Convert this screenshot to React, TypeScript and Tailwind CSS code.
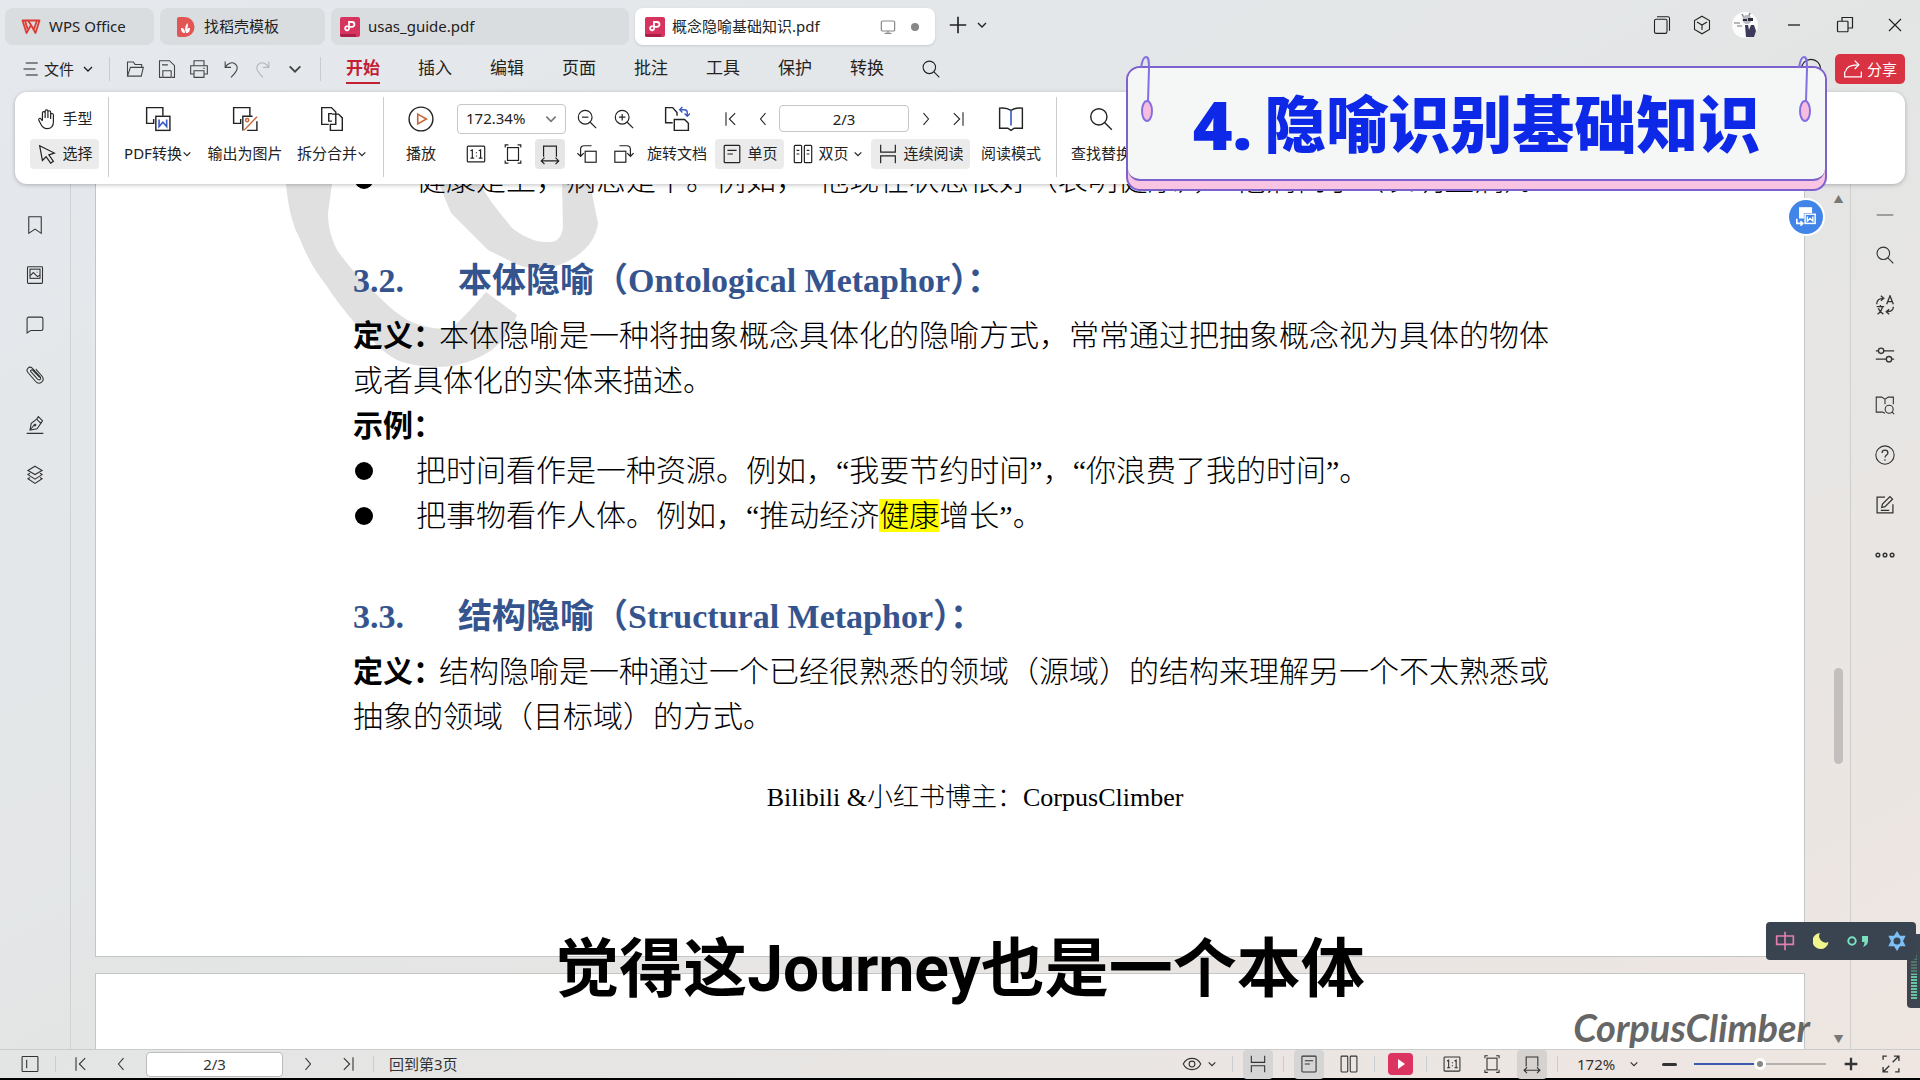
/**
 * App.tsx
 *
 * PDF reader window: tab strip, menu, ribbon, document view with side rails,
 * status bar, and the caption overlays shown on top of it.
 */

import { FC, ReactNode } from "react";
import { clsx } from "clsx";

interface IconProps {
  children: ReactNode;
  className?: string;
}

const Icon: FC<IconProps> = ({ children, className = "size-6" }) => (
  <svg
    viewBox="0 0 24 24"
    fill="none"
    stroke="currentColor"
    strokeWidth="1.3"
    className={clsx("shrink-0", className)}
    aria-hidden="true"
  >
    {children}
  </svg>
);

const ChevronDown: FC<{ className?: string }> = ({ className = "size-3" }) => (
  <svg
    viewBox="0 0 12 12"
    fill="none"
    stroke="currentColor"
    strokeWidth="1.4"
    className={clsx("shrink-0", className)}
    aria-hidden="true"
  >
    <path d="M2 4l4 4 4-4" />
  </svg>
);

const icons = {
  search: (
    <>
      <circle cx="10" cy="10" r="7.5" />
      <path d="M15.5 15.5L22 22" />
    </>
  ),
  first: <path d="M6 4v16M17 5l-7 7 7 7" />,
  prev: <path d="M15 5l-6 7 6 7" />,
  next: <path d="M9 5l6 7-6 7" />,
  last: <path d="M18 4v16M7 5l7 7-7 7" />,
  actualSize: (
    <>
      <rect x="2.5" y="3.5" width="19" height="17" rx="1" />
      <path d="M6 8.5l2-1v9M6 16.500h4M15 8.500l2-1v9M15 16.500h4M12.500 10v1.200M12.500 13.500v1.200" />
    </>
  ),
  fitPage: (
    <>
      <rect x="6" y="5" width="12" height="14" />
      <path d="M7 2H3.500v3M17 2h3.500v3M7 22H3.500v-3M17 22h3.500v-3" />
    </>
  ),
  fitWidth: (
    <path d="M5 15V3.500h14V15M2.500 19.500h19M6 16l-3.500 3.500L6 23M18 16l3.500 3.500L18 23" />
  ),
  continuous: <path d="M4 2v8h16V2M4 22v-8h16v8" />,
  singlePage: (
    <>
      <rect x="3.500" y="2.500" width="17" height="19" rx="1" />
      <path d="M7 8h10M7 12h6" />
    </>
  ),
  twoPages: (
    <>
      <rect x="2.500" y="2.500" width="8" height="19" rx="1" />
      <rect x="13.500" y="2.500" width="8" height="19" rx="1" />
    </>
  ),
};

const PdfBadge: FC = () => (
  <svg viewBox="0 0 20 20" className="size-5 shrink-0" aria-hidden="true">
    <rect width="20" height="20" rx="2" fill="#d6335f" />
    <path d="M0 17h16v3H2a2 2 0 0 1-2-2z" fill="#a91f47" />
    <path
      d="M8 9.500a2 2 0 1 0 1 2.500V5h3a2.400 2.400 0 0 1 0 4.900H9"
      fill="none"
      stroke="#fff"
      strokeWidth="1.800"
    />
  </svg>
);

const Divider: FC<{ className?: string }> = ({ className = "" }) => (
  <div className={clsx("w-px shrink-0 bg-[#c9cdd0]", className)} />
);

interface IconButtonProps {
  label: string;
  children: ReactNode;
  className?: string;
}

const IconButton: FC<IconButtonProps> = ({ label, children, className = "" }) => (
  <button
    type="button"
    aria-label={label}
    className={clsx("flex shrink-0 items-center justify-center", className)}
  >
    {children}
  </button>
);

/* ---------- Tab strip ---------- */

const TabStrip: FC = () => (
  <header className="flex h-[50px] shrink-0 items-center pl-[5px]">
    <nav className="flex gap-[6px] pt-[3px] text-[15px]">
      <button className="flex h-[37px] w-[149px] items-center gap-2 rounded-lg bg-[#dadde0] px-4">
        <svg viewBox="0 0 20 16" className="h-4 w-5" aria-hidden="true">
          <path
            d="M1.500 1.500h17L14.500 14 10 6 5.500 14zM4 1.500L6.500 10M16 1.500L13 10M7 1.500L10 6"
            fill="none"
            stroke="#dc3c34"
            strokeWidth="1.800"
            strokeLinejoin="round"
          />
        </svg>
        WPS Office
      </button>
      <button className="flex h-[37px] w-[165px] items-center gap-2 rounded-lg bg-[#dadde0] px-4">
        <svg viewBox="0 0 20 20" className="size-5" aria-hidden="true">
          <path d="M1 2a2 2 0 0 1 2-2h6a9.500 10 0 0 1 0 20H3a2 2 0 0 1-2-2z" fill="#e25555" />
          <path
            d="M9 16c-3 0-4-2-4-5 3 0 4 2 4 5zM9.500 15c-1-4 0-7 2-9 1 3 0 6-2 9zM10 16c0-3 1-5 4-5 0 3-1 5-4 5z"
            fill="#fff"
          />
        </svg>
        找稻壳模板
      </button>
      <button className="flex h-[37px] w-[298px] items-center gap-2 rounded-lg bg-[#dadde0] px-[9px]">
        <PdfBadge />
        usas_guide.pdf
      </button>
      <button className="flex h-[37px] w-[300px] items-center rounded-lg bg-white px-[10px] shadow-sm">
        <PdfBadge />
        <span className="ml-[7px] flex-1 text-left">概念隐喻基础知识.pdf</span>
        <Icon className="mr-[15px] size-4 text-[#888]">
          <rect x="2" y="3" width="20" height="15" rx="2" strokeWidth="1.800" />
          <path d="M7 21.500h10M12 18v3" strokeWidth="1.800" />
        </Icon>
        <span className="mr-[6px] size-2 rounded-full bg-[#888]" />
      </button>
    </nav>
    <IconButton label="新建标签" className="ml-2 w-[30px]">
      <Icon className="size-[22px]">
        <path d="M12 3v18M3 12h18" strokeWidth="1.800" />
      </Icon>
    </IconButton>
    <IconButton label="标签列表" className="w-[18px]">
      <ChevronDown />
    </IconButton>
    <div className="ml-auto flex items-center">
      <IconButton label="侧边栏" className="w-10">
        <Icon className="size-5">
          <rect x="3" y="5" width="15" height="17" rx="2" />
          <path d="M6 2h13a2 2 0 0 1 2 2v15" />
        </Icon>
      </IconButton>
      <IconButton label="应用" className="w-10">
        <Icon className="size-5">
          <path d="M12 1.500l9 5.200v10.600l-9 5.200-9-5.200V6.700zM6 8.500l6 3.500 6-3.500M12 12v6" />
        </Icon>
      </IconButton>
      <IconButton label="账户" className="w-[46px]">
        <svg viewBox="0 0 26 26" className="size-[26px]" aria-hidden="true">
          <circle cx="13" cy="13" r="13" fill="#fbfbfc" />
          <path d="M10 2l2 4M18 1l-2 5" stroke="#85858f" strokeWidth="1.500" />
          <circle cx="15" cy="7.500" r="4.500" fill="#b9b9c2" />
          <path d="M11 7h4v2h-4zM16 6h5v3h-5z" fill="#2a2a3a" />
          <path d="M13 13h9l2 6-2 6h-8z" fill="#3b3a5a" />
          <path d="M16 13l1 5 2-5z" fill="#eee" />
          <path d="M2 11h6M5 14h5" stroke="#777" strokeWidth="1.200" />
        </svg>
      </IconButton>
      <IconButton label="最小化" className="w-[52px]">
        <Icon className="size-4">
          <path d="M3 12h18" strokeWidth="2" />
        </Icon>
      </IconButton>
      <IconButton label="还原" className="w-[50px]">
        <Icon className="size-[18px]">
          <rect x="2" y="7" width="14" height="14" rx="1" strokeWidth="1.600" />
          <path d="M8 7V2h14v14h-6" strokeWidth="1.600" />
        </Icon>
      </IconButton>
      <IconButton label="关闭" className="w-[50px]">
        <Icon className="size-[18px]">
          <path d="M4 4l16 16M20 4L4 20" strokeWidth="1.600" />
        </Icon>
      </IconButton>
    </div>
  </header>
);

/* ---------- Menu row ---------- */

const menuItems = ["开始", "插入", "编辑", "页面", "批注", "工具", "保护", "转换"];

const MenuRow: FC = () => (
  <div className="flex h-[38px] shrink-0 items-center pr-[15px] pl-[22px]">
    <button className="flex w-[87px] items-center text-[15px]">
      <Icon className="mr-1 size-[18px]">
        <path d="M5 4h16M2 12h16M5 20h16" strokeWidth="1.600" />
      </Icon>
      文件
      <ChevronDown className="ml-2 size-3" />
    </button>
    <Divider className="mr-[9px] h-6" />
    <div className="flex text-[#444]">
      <IconButton label="打开" className="w-8">
        <Icon className="size-5">
          <path d="M3 20.500V3.500h7l2 3h8V10M3 20.500L6.500 10H22l-2.500 10.500z" />
        </Icon>
      </IconButton>
      <IconButton label="保存" className="w-8">
        <Icon className="size-5">
          <path d="M6 22H3V2h12l6 6v14h-3M7 22v-8h10v8zM6 7h7" />
        </Icon>
      </IconButton>
      <IconButton label="打印" className="w-8">
        <Icon className="size-5">
          <path d="M6 8V2h12v6M6 18H2V8h20v10h-4M6 14h12v8H6zM17 11h2" />
        </Icon>
      </IconButton>
      <IconButton label="撤销" className="w-8">
        <Icon className="size-5">
          <path d="M5 3v7h7M5 10c3-5 8-7 12-4 5 4 2 9-5 16" />
        </Icon>
      </IconButton>
      <IconButton label="恢复" className="w-8 text-[#b4b7ba]">
        <Icon className="size-5">
          <path d="M19 3v7h-7M19 10c-3-5-8-7-12-4-5 4-2 9 5 16" />
        </Icon>
      </IconButton>
      <IconButton label="更多" className="w-8">
        <ChevronDown className="size-4" />
      </IconButton>
    </div>
    <Divider className="mr-[6px] ml-[9px] h-6" />
    {menuItems.map((item, i) => (
      <button
        key={item}
        className={clsx(
          "flex w-[72px] justify-center text-[17px] leading-7",
          i === 0 && "font-bold text-[#c32034]"
        )}
      >
        <span className={clsx("border-b-2", i === 0 ? "border-[#c32034]" : "border-transparent")}>
          {item}
        </span>
      </button>
    ))}
    <IconButton label="搜索" className="ml-4 w-[24px]">
      <Icon className="size-5">{icons.search}</Icon>
    </IconButton>
    <IconButton label="云同步" className="mr-[13px] ml-auto w-[22px]">
      <Icon className="size-[22px]">
        <circle cx="12" cy="12" r="10.500" />
      </Icon>
    </IconButton>
    <button className="flex h-[30px] w-[70px] items-center justify-center gap-1 rounded-[5px] bg-[#d93343] text-[15px] text-white">
      <Icon className="size-5">
        <path d="M2 15v6.500h20V15M3 15c1-6 6-8 15-8M14 2l5 5-5 5" strokeWidth="1.500" />
      </Icon>
      分享
    </button>
  </div>
);

/* ---------- Ribbon ---------- */

interface BigButtonProps {
  label: string;
  children: ReactNode;
  className?: string;
  menu?: boolean;
}

const BigButton: FC<BigButtonProps> = ({ label, children, className = "", menu }) => (
  <button className={clsx("grid shrink-0 grid-rows-[35px_35px] place-items-center", className)}>
    <Icon className="size-[26px]">{children}</Icon>
    <span className="flex items-center whitespace-nowrap">
      {label}
      {menu && <ChevronDown className="size-[10px]" />}
    </span>
  </button>
);

const Ribbon: FC = () => (
  <section className="relative z-10 mx-[15px] mt-1 flex h-[92px] shrink-0 rounded-xl bg-white pt-[9px] pb-[11px] text-[15px] shadow-[0_1px_4px_rgba(0,0,0,0.25)]">
    <div className="grid w-[93px] grid-rows-[35px_35px] items-center pl-[15px]">
      <button className="flex h-[30px] w-[69px] items-center justify-center gap-1">
        <Icon className="size-[22px]">
          <path d="M7 14V5.500a1.500 1.500 0 0 1 3 0V11M10 11V3.500a1.500 1.500 0 0 1 3 0V11M13 11V4.500a1.500 1.500 0 0 1 3 0V12M16 12V7.500a1.500 1.500 0 0 1 3 0V15c0 5-3 7.500-7 7.500-3.500 0-5-1.500-6.500-4.500L3 13c-.5-1.500 1.500-2.500 2.500-1L7 14" />
        </Icon>
        手型
      </button>
      <button className="flex h-[30px] w-[69px] items-center justify-center gap-1 rounded bg-[#ebebeb]">
        <Icon className="size-[22px]">
          <path d="M4 3l16 8-6 2 5 7-3 2-5-7-4 4z" />
        </Icon>
        选择
      </button>
    </div>
    <Divider className="-my-[4px]" />
    <div className="flex w-[274px] justify-center pr-[2px]">
      <BigButton label="PDF转换" menu className="w-[87px]">
        <path d="M8 16H1.500V1.500h15V9M4 16h4v-4" />
        <rect x="10" y="9.500" width="13" height="13" />
        <path d="M13 12.500v6.500l3.500-4 3.500 4v-6.500" stroke="#3a5bc7" strokeWidth="1.500" />
      </BigButton>
      <BigButton label="输出为图片" className="w-[87px]">
        <path d="M8 16H1.500V1.500h15V9M4 16h4v-4M19 9.500h-9v13M23 14v8.500h-9" />
        <path d="M11 22.500L23 10" stroke="#c8673a" />
        <circle cx="14" cy="13" r="1.500" stroke="#c8673a" />
      </BigButton>
      <BigButton label="拆分合并" menu className="w-[87px]">
        <path d="M9 17H2.500V1.500h9l4 4V7M12 7.500h6l3.500 3.500v11.500H10.500v-5.500h5V7.500M12 7H9v7h3" />
      </BigButton>
    </div>
    <Divider className="-my-[4px]" />
    <div className="flex w-[672px] pl-[7px]">
      <BigButton label="播放" className="mr-[6px] w-[60px]">
        <circle cx="12" cy="12" r="11" />
        <path d="M9 7.500l8 4.500-8 4.500z" stroke="#c8673a" strokeWidth="1.500" />
      </BigButton>
      <div className="grid w-[185px] shrink-0 grid-rows-[35px_35px] items-center">
        <div className="flex items-center">
          <div className="relative mr-[2px] w-[109px]">
            <select
              aria-label="缩放比例"
              className="h-[30px] w-full appearance-none rounded border border-[#c6c6c6] bg-white pl-2"
            >
              <option>172.34%</option>
            </select>
            <ChevronDown className="pointer-events-none absolute top-2 right-2 size-[14px] text-[#777]" />
          </div>
          <IconButton label="缩小" className="w-[37px]">
            <Icon className="size-[22px]">
              {icons.search}
              <path d="M6.500 10h7" />
            </Icon>
          </IconButton>
          <IconButton label="放大" className="w-[37px]">
            <Icon className="size-[22px]">
              {icons.search}
              <path d="M6.500 10h7M10 6.500v7" />
            </Icon>
          </IconButton>
        </div>
        <div className="flex">
          <IconButton label="实际大小" className="h-[30px] w-[37px]">
            <Icon className="size-[22px]">{icons.actualSize}</Icon>
          </IconButton>
          <IconButton label="适合页面" className="h-[30px] w-[37px]">
            <Icon className="size-[22px]">{icons.fitPage}</Icon>
          </IconButton>
          <span className="flex w-[37px] justify-center">
            <IconButton label="适合宽度" className="h-[30px] w-[30px] rounded bg-[#e6e6e6]">
              <Icon className="size-[22px]">{icons.fitWidth}</Icon>
            </IconButton>
          </span>
          <IconButton label="向左旋转" className="h-[30px] w-[37px]">
            <Icon className="size-[22px]">
              <rect x="10" y="9" width="12" height="12" />
              <path d="M17 3H9C6 3 5 4.500 5 7v7M1.500 11L5 14.500 8.500 11" />
            </Icon>
          </IconButton>
          <IconButton label="向右旋转" className="h-[30px] w-[37px]">
            <Icon className="size-[22px]">
              <rect x="2" y="9" width="12" height="12" />
              <path d="M7 3h8c3 0 4 1.500 4 4v7M22.500 11L19 14.500 15.500 11" />
            </Icon>
          </IconButton>
        </div>
      </div>
      <BigButton label="旋转文档" className="w-[70px]">
        <path d="M8 15.500H1.500V1.500H8L12 6v3M9.500 12.500h9.500l3.500 3.500v6.500h-13z" />
        <path d="M15 3.500h4c2 0 2.500 1 2.500 3V9M17 1l-2.500 2.500L17 6M19 7l2.500 2.500L24 7" stroke="#3a5bc7" />
      </BigButton>
      <div className="grid w-[260px] shrink-0 grid-rows-[35px_35px] items-center pl-[3px]">
        <div className="flex items-center">
          <IconButton label="第一页" className="w-8">
            <Icon className="size-5">{icons.first}</Icon>
          </IconButton>
          <IconButton label="上一页" className="w-8">
            <Icon className="size-5">{icons.prev}</Icon>
          </IconButton>
          <input
            aria-label="页码"
            defaultValue="2/3"
            className="h-[27px] w-[130px] rounded border border-[#c6c6c6] text-center"
          />
          <IconButton label="下一页" className="w-[34px]">
            <Icon className="size-5">{icons.next}</Icon>
          </IconButton>
          <IconButton label="最后一页" className="w-[29px]">
            <Icon className="size-5">{icons.last}</Icon>
          </IconButton>
        </div>
        <div className="flex items-center gap-[5px]">
          <button className="flex h-[30px] w-[69px] items-center justify-center gap-1 rounded bg-[#ebebeb]">
            <Icon className="size-[22px]">{icons.singlePage}</Icon>
            单页
          </button>
          <button className="flex h-[30px] w-[77px] items-center justify-center gap-1">
            <Icon className="size-[22px]">
              {icons.twoPages}
              <path d="M5 8h3M5 12h3M16 8h3M16 12h3" />
            </Icon>
            双页
            <ChevronDown className="size-[10px]" />
          </button>
          <button className="flex h-[30px] w-[99px] items-center justify-center gap-1 rounded bg-[#ebebeb]">
            <Icon className="size-[22px]">{icons.continuous}</Icon>
            连续阅读
          </button>
        </div>
      </div>
      <BigButton label="阅读模式" className="ml-1 w-[70px]">
        <path d="M12 4C9 2 5 1.500 1.500 2v18.500H9l3 2 3-2h7.500V2C19 1.500 15 2 12 4z" />
        <path d="M12 4v14" stroke="#3a5bc7" strokeWidth="1.500" />
      </BigButton>
    </div>
    <Divider className="-my-[4px]" />
    <BigButton label="查找替换" className="ml-[9px] w-[70px]">
      {icons.search}
    </BigButton>
  </section>
);

/* ---------- Side rails ---------- */

const leftTools: [string, ReactNode][] = [
  ["书签", <path d="M4.500 2h15v20L12 17l-7.500 5z" />],
  [
    "缩略图",
    <>
      <rect x="3" y="2" width="18" height="20" rx="1" />
      <rect x="6" y="5" width="12" height="11" />
      <path d="M6 13l4-4 5 5 3-2M14.500 8v1" />
    </>,
  ],
  ["批注", <path d="M2.500 21.500v-17c0-1 1-2 2-2h15c1 0 2 1 2 2v12c0 1-1 2-2 2H7z" />],
  [
    "附件",
    <path d="M7 8l8 9c2.500 2 5-.5 3-3L9 4C5 .5 .5 5 3.500 9l9 10.500c5 5.500 12-.5 8-6L13 5M7 8c-1-1.500 1-3 2.500-1.500l8 8.500" />,
  ],
  [
    "签名",
    <>
      <path d="M2 22h20M6 18l1.500-8L14 5l5 5-4.500 6.500zM14 5l2-3 5 5-2 3M6 18l5-6" />
      <circle cx="12" cy="12" r="1" />
    </>,
  ],
  [
    "图层",
    <path d="M12 1.500L20.500 6.500 12 11.500 3.500 6.500zM6 10l-2.500 1.500L12 17l8.500-5.500L18 10M6 15l-2.500 1.500L12 22l8.500-5.500L18 15" />,
  ],
];

const rightTools: [string, ReactNode][] = [
  ["折叠", <path d="M1 12h22" stroke="#999" strokeWidth="2.500" />],
  ["查找", icons.search],
  [
    "翻译",
    <path
      d="M2 11c0-5 3-7 8-7M7 1l3.500 3L7 7M14 11l4-10 4 10M15.500 8h5M2 14h9M6.500 12v2M3 23c4-2 5-5 6-9M4 16c1 3 3 5 6 7M22 14c0 4-2 6-8 6M17 17l-3.500 3 3.500 3"
      strokeWidth="1.600"
    />,
  ],
  [
    "设置",
    <>
      <path d="M1 7h3M10.500 7H23M1 17h12.500M20 17h3" strokeWidth="1.600" />
      <circle cx="7.300" cy="7" r="3.200" strokeWidth="1.600" />
      <circle cx="16.800" cy="17" r="3.200" strokeWidth="1.600" />
    </>,
  ],
  [
    "词典",
    <>
      <path d="M12 22l-3-1.500H1.500V2.500l6.500 0 4 2.500 4-2.500h6V11M12 5v6" />
      <circle cx="17" cy="17" r="4.800" />
      <path d="M20.500 20.500L23 23" />
    </>,
  ],
  [
    "帮助",
    <>
      <circle cx="12" cy="12" r="11" />
      <path d="M8.500 9.500c0-4.500 7-4.500 7 0 0 2.500-3.500 2.500-3.500 5.500M12 17v2" strokeWidth="1.500" />
    </>,
  ],
  [
    "反馈",
    <path d="M12 2.500H2.500v19h19V11M8 15l1-4 9-9 3 3-9 9zM7 18.500h10" strokeWidth="1.500" />,
  ],
  [
    "更多",
    <>
      <circle cx="3.500" cy="12" r="2.200" strokeWidth="1.700" />
      <circle cx="12" cy="12" r="2.200" strokeWidth="1.700" />
      <circle cx="20.500" cy="12" r="2.200" strokeWidth="1.700" />
    </>,
  ],
];

/* ---------- Document ---------- */

const Heading: FC<{ number: string; children: ReactNode }> = ({ number, children }) => (
  <h2 className="flex pt-1 text-[34px] leading-[64px] font-bold whitespace-nowrap text-[#35548e]">
    <span className="w-[105px]">{number}</span>
    {children}
  </h2>
);

const Term: FC<{ children: ReactNode }> = ({ children }) => (
  <b className="-mr-1 font-bold">{children}</b>
);

const Bullet: FC<{ children: ReactNode }> = ({ children }) => (
  <li className="flex items-center">
    <span className="mr-[43px] ml-[2px] size-[18px] rounded-full bg-black" />
    <span>{children}</span>
  </li>
);

const Watermark: FC = () => (
  <svg
    viewBox="0 0 520 190"
    className="absolute top-0 left-[186px] h-[190px] w-[520px]"
    fill="#e0e0e0"
    aria-hidden="true"
  >
    <path d="M4 0C6 22 10 40 17 53c8 20 16 34 27 48 10 15 19 27 31 40 14 14 26 28 40 35 18 7 38 8 55 6 16-3 27-8 40-16 12-10 20-20 25-35L204 108c-8 9-16 19-34 36-14 2-28-1-40-6-14-6-28-20-43-35C74 91 62 76 55 66 48 52 46 40 46 29L50 0z" />
    <path d="M157 0l12 29 37 37 26 13c10 5 24 7 38 4 22-5 44-22 46-44L308 0h-28l1 43c-1 10-6 16-15 15-12 1-26-6-36-14L210 19 198 0z" />
  </svg>
);

const DocumentView: FC = () => (
  <div className="flex min-w-0 flex-1 flex-col overflow-hidden pl-6 font-['Liberation_Serif','Noto_Sans_CJK_SC',serif]">
    <article className="relative shrink-0 border border-t-0 border-[#c4c6c6] bg-white pb-[136px] pl-[257px] text-[30px] leading-[45px] font-light text-black">
      <Watermark />
      <div className="relative">
        <div className="mb-[43px] flex h-[18px] items-end overflow-hidden whitespace-nowrap">
          <ul>
            <Bullet>健康是上，病态是下。例如，“他现在状态很好”（表明健康），“他病倒了”（表明生病）。</Bullet>
          </ul>
        </div>
        <Heading number="3.2.">本体隐喻（Ontological Metaphor）：</Heading>
        <p className="whitespace-nowrap">
          <Term>定义：</Term>本体隐喻是一种将抽象概念具体化的隐喻方式，常常通过把抽象概念视为具体的物体
          <br />
          或者具体化的实体来描述。
        </p>
        <p>
          <Term>示例：</Term>
        </p>
        <ul className="whitespace-nowrap">
          <Bullet>把时间看作是一种资源。例如，“我要节约时间”，“你浪费了我的时间”。</Bullet>
          <Bullet>
            把事物看作人体。例如，“推动经济<mark className="bg-[#ffff00]">健康</mark>增长”。
          </Bullet>
        </ul>
        <div className="h-[43px]" />
        <Heading number="3.3.">结构隐喻（Structural Metaphor）：</Heading>
        <p className="whitespace-nowrap">
          <Term>定义：</Term>结构隐喻是一种通过一个已经很熟悉的领域（源域）的结构来理解另一个不太熟悉或
          <br />
          抽象的领域（目标域）的方式。
        </p>
      </div>
      <footer className="mt-9 pr-[207px] text-center text-[26px]">
        Bilibili &amp;小红书博主：CorpusClimber
      </footer>
    </article>
    <article className="mt-4 flex-1 border border-b-0 border-[#c4c6c6] bg-white" />
  </div>
);

/* ---------- Status bar ---------- */

const StatusBar: FC = () => (
  <footer className="flex h-[31px] shrink-0 items-center border-t border-b-2 border-t-[#c9cbcc] border-b-black pr-[19px] text-[15px] text-[#333]">
    <IconButton label="导航窗格" className="w-[60px] pr-px">
      <Icon className="size-5">
        <rect x="2.500" y="3" width="19" height="18" rx="1" />
        <path d="M8 7v10" />
      </Icon>
    </IconButton>
    <Divider className="mr-[5px] -ml-[5px] h-4" />
    <IconButton label="第一页" className="w-10">
      <Icon className="size-5">{icons.first}</Icon>
    </IconButton>
    <IconButton label="上一页" className="w-10">
      <Icon className="size-5">{icons.prev}</Icon>
    </IconButton>
    <input
      aria-label="当前页"
      defaultValue="2/3"
      className="ml-[5px] h-[25px] w-[137px] rounded border border-[#bbb] bg-white text-center"
    />
    <IconButton label="下一页" className="ml-[5px] w-10">
      <Icon className="size-5">{icons.next}</Icon>
    </IconButton>
    <IconButton label="最后一页" className="w-10">
      <Icon className="size-5">{icons.last}</Icon>
    </IconButton>
    <Divider className="mr-[15px] ml-[5px] h-4" />
    <button>回到第3页</button>

    <div className="ml-auto flex items-center">
      <IconButton label="视图" className="w-[46px] gap-[5px]">
        <Icon className="size-5">
          <path d="M1.500 12C6 3 18 3 22.500 12 18 21 6 21 1.500 12z" />
          <circle cx="12" cy="12" r="3.500" />
        </Icon>
        <ChevronDown className="size-[10px]" />
      </IconButton>
      <Divider className="mx-[10px] h-4" />
      <IconButton label="连续" className="h-[29px] w-[30px] rounded bg-[#d5d5d5]">
        <Icon className="size-5">{icons.continuous}</Icon>
      </IconButton>
      <Divider className="mx-[10px] h-4" />
      <IconButton label="单页" className="h-[29px] w-[30px] rounded bg-[#d5d5d5]">
        <Icon className="size-5">{icons.singlePage}</Icon>
      </IconButton>
      <IconButton label="双页" className="ml-[10px] w-[30px]">
        <Icon className="size-5">{icons.twoPages}</Icon>
      </IconButton>
      <Divider className="mr-[13px] ml-[10px] h-4" />
      <IconButton label="播放" className="h-[22px] w-[25px] rounded bg-[#dc3460]">
        <svg viewBox="0 0 10 10" className="size-[10px]" aria-hidden="true">
          <path d="M2 0l7 5-7 5z" fill="#fff" />
        </svg>
      </IconButton>
      <Divider className="mr-[10px] ml-[13px] h-4" />
      <IconButton label="实际大小" className="w-[30px]">
        <Icon className="size-5">{icons.actualSize}</Icon>
      </IconButton>
      <IconButton label="适合页面" className="mx-[10px] w-[30px]">
        <Icon className="size-5">{icons.fitPage}</Icon>
      </IconButton>
      <IconButton label="适合宽度" className="h-[29px] w-[30px] rounded bg-[#d5d2d0]">
        <Icon className="size-5">{icons.fitWidth}</Icon>
      </IconButton>
      <Divider className="mr-[19px] ml-[10px] h-4" />
      <button className="flex w-[62px] items-center justify-between">
        172%
        <ChevronDown className="size-[10px]" />
      </button>
      <IconButton label="缩小" className="ml-[21px] w-[18px]">
        <span className="h-[3px] w-[15px] rounded bg-[#333]" />
      </IconButton>
      <input
        type="range"
        aria-label="缩放"
        defaultValue={50}
        className="mx-4 h-3 w-[132px] appearance-none bg-linear-to-r from-[#3a5bb0] from-50% to-[#b5b1ae] to-50% bg-[length:100%_2px] bg-center bg-no-repeat [&::-webkit-slider-thumb]:size-3 [&::-webkit-slider-thumb]:appearance-none [&::-webkit-slider-thumb]:rounded-full [&::-webkit-slider-thumb]:border-[3px] [&::-webkit-slider-thumb]:border-white [&::-webkit-slider-thumb]:bg-[#888]"
      />
      <IconButton label="放大" className="w-[18px]">
        <Icon className="size-4">
          <path d="M12 2.500v19M2.500 12h19" strokeWidth="3.500" />
        </Icon>
      </IconButton>
      <IconButton label="全屏" className="ml-[21px] w-5">
        <Icon className="size-5">
          <path
            d="M2.500 7V2.500H7M21.500 17v4.500H17M14 10l7.500-7.500M15.500 2.500h6v6M10 14l-7.500 7.500M8.500 21.500h-6v-6"
            strokeWidth="1.600"
          />
        </Icon>
      </IconButton>
    </div>
  </footer>
);

/* ---------- Overlays ---------- */

const BannerPin: FC<{ className: string }> = ({ className }) => (
  <svg viewBox="0 0 16 68" className={clsx("absolute h-[68px] w-4", className)} aria-hidden="true">
    <path
      d="M2 12C3 5 5 1 7 1c3 0 3 5 3 12L9 45"
      fill="none"
      stroke="#8370e0"
      strokeWidth="2"
    />
    <ellipse cx="8" cy="55" rx="5" ry="10" fill="#f7bcdf" stroke="#8370e0" strokeWidth="2" />
  </svg>
);

const TitleBanner: FC = () => (
  <div className="absolute top-[66px] right-[93px] z-20 w-[701px] rounded-[14px] border-2 border-[#7c62cc] bg-[#f8c4e2] pb-2">
    <div className="flex h-[113px] items-center justify-center gap-3 rounded-[12px] border-b-2 border-[#7c62cc] bg-[#f5f7f7] font-black text-[#0d28e6]">
      <span className="text-[68px] leading-none">4.</span>
      <span className="text-[62px] leading-none">隐喻识别基础知识</span>
    </div>
    <BannerPin className="-top-3 left-[11px]" />
    <BannerPin className="-top-3 right-[12px]" />
  </div>
);

const InputMethodBar: FC = () => (
  <div className="absolute right-0 bottom-[72px] z-20 h-[86px] w-[154px]">
    <div className="absolute right-0 bottom-0 flex h-[74px] w-[13px] items-end justify-end rounded-l bg-[#3f4550] pr-[3px] pb-2">
      <div className="flex h-[46px] w-[6px] flex-col bg-[repeating-linear-gradient(#3f4550_0_1px,#67c4a0_1px_3px)]">
        <div className="h-[20px] bg-[#3f4550]/60" />
      </div>
    </div>
    <div className="relative flex h-[38px] w-[150px] items-center justify-between rounded bg-[#3a4350] px-[9px]">
      <Icon className="size-5 text-[#e07fb0]">
        <path d="M2 6h20v10H2zM12 1v22" strokeWidth="2" />
      </Icon>
      <svg viewBox="0 0 16 16" className="size-4" aria-hidden="true">
        <path d="M7 0a6.500 6.500 0 0 0 8.500 9A8 8 0 1 1 7 0z" fill="#f1f58c" />
      </svg>
      <svg viewBox="0 0 22 14" className="h-[14px] w-[22px]" aria-hidden="true">
        <circle cx="5" cy="7" r="3.700" fill="none" stroke="#7be0c0" strokeWidth="2" />
        <path d="M15 2h6v5c0 3-2 5-5 6 1-2 1.500-3 1.500-5H15z" fill="#7be0c0" />
      </svg>
      <svg viewBox="0 0 20 20" className="size-5" aria-hidden="true">
        <path
          d="M10 0l3 4.800h5.700L16 10l2.700 5.200H13L10 20l-3-4.800H1.300L4 10 1.300 4.800H7z"
          fill="#7cc0f5"
        />
        <circle cx="10" cy="10" r="3.500" fill="#3a4350" />
      </svg>
    </div>
  </div>
);

const App: FC = () => (
  <div className="relative flex h-screen w-full flex-col overflow-hidden bg-linear-to-br from-[#e5e9ee] via-[#e3e5e5] to-[#efe6e1] font-['Noto_Sans','Noto_Sans_CJK_SC',sans-serif] text-[#222]">
    <TabStrip />
    <MenuRow />
    <Ribbon />
    <main className="flex min-h-0 flex-1">
      <aside className="flex w-[71px] shrink-0 flex-col items-center border-r border-[#cfd2d3] pt-4 text-[#333]">
        {leftTools.map(([label, shape]) => (
          <IconButton key={label} label={label} className="h-[50px] w-full">
            <Icon className="size-5">{shape}</Icon>
          </IconButton>
        ))}
      </aside>
      <DocumentView />
      <div className="flex w-[45px] shrink-0 flex-col items-center pt-[10px] pb-[5px] pl-[22px] text-[10px] leading-[10px] text-[#777]">
        <span>▲</span>
        <div className="mt-[464px] h-24 w-[9px] rounded-full bg-[#c3bfbe]" />
        <span className="mt-auto">▼</span>
      </div>
      <aside className="flex w-[70px] shrink-0 flex-col items-center border-l border-[#cfcfcf] pt-[6px] pr-[2px] text-[#333]">
        {rightTools.map(([label, shape], i) => (
          <IconButton
            key={label}
            label={label}
            className={i === 0 ? "h-10 w-full pt-[10px]" : "h-[50px] w-full"}
          >
            <Icon className={i === 0 ? "size-[18px]" : "size-5"}>{shape}</Icon>
          </IconButton>
        ))}
      </aside>
    </main>
    <StatusBar />

    <TitleBanner />
    <button
      aria-label="转为Word"
      className="absolute top-[200px] right-[97px] z-10 flex size-[34px] items-center justify-center rounded-full bg-[#4285e8] text-white ring-2 ring-white"
    >
      <Icon className="size-[22px]">
        <path d="M5 2h13v5H9v6H5z" fill="currentColor" />
        <path d="M2 14v5h6M6 16.500L8.500 19 6 21.500" strokeWidth="1.800" />
        <rect x="11" y="9" width="11" height="10" strokeWidth="1.600" />
        <path d="M13.500 11.500v5l3-3 3 3v-5" strokeWidth="1.500" />
      </Icon>
    </button>
    <p className="absolute inset-x-0 bottom-[64px] z-20 text-center font-['Roboto','Noto_Sans_CJK_SC',sans-serif] text-[64px] leading-[92px] font-bold whitespace-nowrap text-black">
      觉得这Journey也是一个本体
    </p>
    <p className="absolute right-[110px] bottom-[33px] z-20 font-['Lato',sans-serif] text-[38px] leading-10 font-bold text-[#666] italic">
      CorpusClimber
    </p>
    <InputMethodBar />
  </div>
);

export default App;
